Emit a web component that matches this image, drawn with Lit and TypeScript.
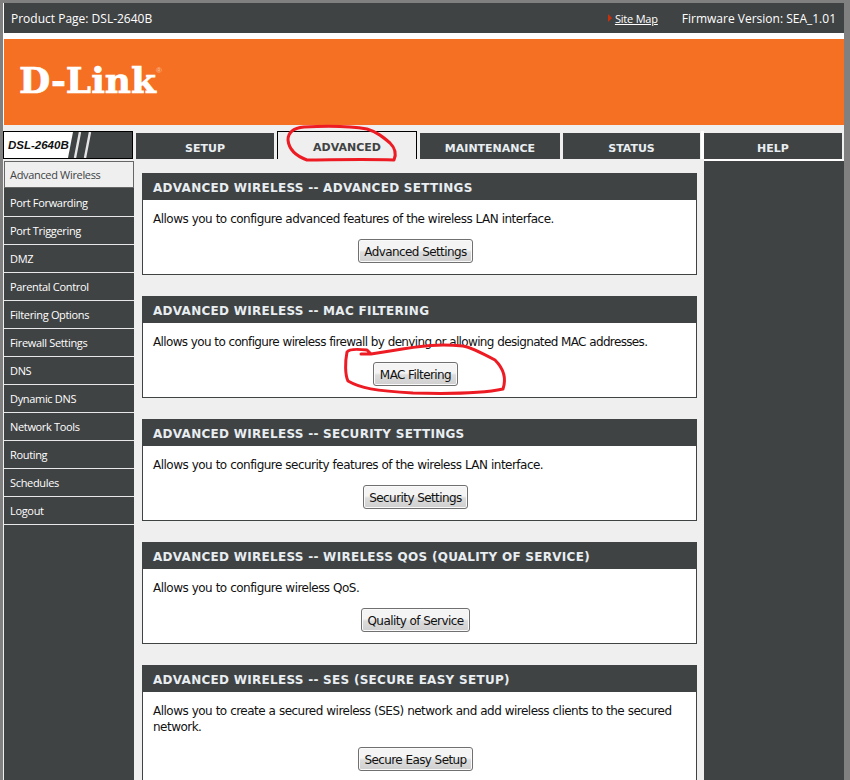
import { LitElement, html, css } from "lit";
import { customElement } from "lit/decorators.js";

const NAV = ["Advanced Wireless","Port Forwarding","Port Triggering","DMZ","Parental Control","Filtering Options","Firewall Settings","DNS","Dynamic DNS","Network Tools","Routing","Schedules","Logout"];
const TABS = ["SETUP","ADVANCED","MAINTENANCE","STATUS"];
const SECTIONS = [
  { t: "ADVANCED WIRELESS -- ADVANCED SETTINGS", d: "Allows you to configure advanced features of the wireless LAN interface.", b: "Advanced Settings", c: "" },
  { t: "ADVANCED WIRELESS -- MAC FILTERING", d: "Allows you to configure wireless firewall by denying or allowing designated MAC addresses.", b: "MAC Filtering", c: "tight" },
  { t: "ADVANCED WIRELESS -- SECURITY SETTINGS", d: "Allows you to configure security features of the wireless LAN interface.", b: "Security Settings", c: "" },
  { t: "ADVANCED WIRELESS -- WIRELESS QOS (QUALITY OF SERVICE)", d: "Allows you to configure wireless QoS.", b: "Quality of Service", c: "" },
  { t: "ADVANCED WIRELESS -- SES (SECURE EASY SETUP)", d: "Allows you to create a secured wireless (SES) network and add wireless clients to the secured network.", b: "Secure Easy Setup", c: "" },
];

@customElement("app-root")
export class AppRoot extends LitElement {
  static styles = css`
    :host { display: block; position: relative; width: 850px; height: 780px; overflow: hidden; background: #808080; font-family: "DejaVu Sans", sans-serif; font-size: 12px; color: #111; }
    .page { margin: 3px 6px 0 3px; background: #fff; padding-left: 1px; height: 777px; display: flex; flex-direction: column; overflow: hidden; }
    .top { height: 30px; flex: none; background: #404344; color: #fff; display: flex; align-items: center; padding: 0 8px 0 7px; font-family: "Open Sans", sans-serif; font-size: 12px; }
    .top .prod { flex: 1; }
    .arrow { width: 0; height: 0; border-left: 4px solid #c8300c; border-top: 4px solid transparent; border-bottom: 4px solid transparent; margin-right: 3px; }
    .site { color: #fff; text-decoration: underline; font-size: 11px; letter-spacing: -.2px; margin-right: 24px; }
    .brand { height: 86px; flex: none; margin-top: 6px; background: #f57023; display: flex; align-items: center; padding-left: 15px; }
    .logo { font-family: "DejaVu Serif", serif; font-weight: 700; font-size: 36px; color: #fff; line-height: 1; letter-spacing: 0; -webkit-text-stroke: .7px #fff; display: flex; align-items: flex-start; margin-top: -5px; }
    .logo sup { font-family: "Liberation Sans", sans-serif; font-size: 8px; color: #f9b68c; -webkit-text-stroke: 0; margin: 5px 0 0 0; line-height: 1; }
    .main { flex: 1; min-height: 0; display: grid; grid-template-columns: 131px 570px 140px; margin-left: -1px; background: #efefef; padding-top: 3px; }
    .side { display: flex; flex-direction: column; min-height: 0; }
    .model { height: 28px; width: 130px; margin-top: 3px; box-sizing: border-box; border: 1px solid #000; background: #fff; position: relative; flex: none; display: flex; align-items: center; }
    .model b { font: italic 700 11.5px "Liberation Sans", sans-serif; letter-spacing: 0; padding-left: 4px; color: #111; position: relative; white-space: nowrap; }
    .slashes { position: absolute; left: 0; top: 0; }
    .nav { margin: 2px 0 0 1px; flex: 1; background: #404344; display: flex; flex-direction: column; }
    .nav div { height: 28px; box-sizing: border-box; padding: 0 0 0 6px; border-bottom: 1px solid #e8e8e8; display: flex; align-items: center; color: #fff; font: 11px "Open Sans", sans-serif; letter-spacing: -.33px; }
    .nav div.on { background: #efefef; color: #404344; border: 1px solid #666; padding: 0 0 0 5px; height: 27px; margin-bottom: 1px; }
    .center { display: flex; flex-direction: column; min-height: 0; }
    .tabs { height: 31px; flex: none; display: grid; grid-template-columns: 138px 140px 140px 137px 1px; column-gap: 3px; padding: 5px 0 0 2px; box-sizing: border-box; }
    .tab { background: #404344; color: #e8eef2; height: 26px; font: 700 11px "DejaVu Sans", sans-serif; letter-spacing: 0; display: flex; align-items: flex-end; justify-content: center; padding-bottom: 4px; box-sizing: border-box; }
    .tab.on { background: #efefef; color: #404344; border: 1px solid #000; border-bottom: 0; margin-top: -2px; height: 28px; padding-bottom: 5px; }
    .ws { width: 3px; margin: -2px 0 0 -2px; height: 28px; background: #fff; }
    .content { padding: 14px 7px 0 8px; display: flex; flex-direction: column; gap: 21px; overflow: hidden; min-height: 0; }
    .sec { flex: none; border: 1px solid #404344; background: #fff; }
    .sec.short { height: 102px; box-sizing: border-box; }
    .sec h2 { margin: 0; height: 26px; background: #404344; color: #e8eef2; font: 700 12px "DejaVu Sans", sans-serif; letter-spacing: .28px; display: flex; align-items: center; padding: 2px 0 0 10px; white-space: nowrap; box-sizing: border-box; }
    .sec p { margin: 0; padding: 11px 10px 0; font: 12px/16px "DejaVu Sans", sans-serif; letter-spacing: -.52px; word-spacing: .2px; }
    .sec p.tight { letter-spacing: -.64px; }
    .act { display: flex; justify-content: center; padding: 12px 8px 10px 0; }
    button { height: 24px; box-sizing: border-box; border: 1px solid #707070; border-radius: 3px; background: linear-gradient(#f4f4f4 0 45%, #dcdcdc 55%, #cfcfcf); color: #111; font: 12px "DejaVu Sans", sans-serif; letter-spacing: -.58px; padding: 2px 5.5px 0; box-shadow: inset 0 0 0 1px #fafafa; }
    .help { display: flex; flex-direction: column; min-height: 0; }
    .ht { height: 26px; margin-top: 5px; width: 138px; background: #404344; color: #e8eef2; font: 700 11px "DejaVu Sans", sans-serif; display: flex; align-items: flex-end; justify-content: center; padding-bottom: 4px; box-sizing: border-box; flex: none; }
    .hb { flex: 1; background: #404344; border-top: 2px solid #fff; }
    .ink { position: absolute; inset: 0; pointer-events: none; }
  `;
  render() {
    return html`
      <div class="page">
        <div class="top">
          <span class="prod">Product Page: DSL-2640B</span>
          <span class="arrow"></span><a class="site">Site Map</a>
          <span>Firmware Version: SEA_1.01</span>
        </div>
        <div class="brand"><span class="logo">D-Link<sup>®</sup></span></div>
        <div class="main">
          <div class="side">
            <div class="model">
              <svg class="slashes" width="128" height="26" viewBox="0 0 128 26">
                <path d="M64 26 L69 0 L128 0 L128 26 Z" fill="#404344"/>
                <path d="M71 26 L76 0 M81 26 L86 0" stroke="#e4e4e4" stroke-width="2.4" fill="none"/>
              </svg>
              <b>DSL-2640B</b>
            </div>
            <div class="nav">${NAV.map((n, i) => html`<div class=${i === 0 ? "on" : ""}>${n}</div>`)}</div>
          </div>
          <div class="center">
            <div class="tabs">${TABS.map((t) => html`<div class="tab ${t === "ADVANCED" ? "on" : ""}">${t}</div>`)}<div class="ws"></div></div>
            <div class="content">
              ${SECTIONS.map((s, i) => html`<section class="sec ${i < 4 ? "short" : ""}"><h2>${s.t}</h2><p class=${s.c}>${s.d}</p><div class="act"><button>${s.b}</button></div></section>`)}
            </div>
          </div>
          <div class="help"><div class="ht">HELP</div><div class="hb"></div></div>
        </div>
      </div>
      <svg class="ink" width="850" height="780" viewBox="0 0 850 780">
        <g fill="none" stroke="#ed1c24" stroke-width="3" stroke-linecap="round" stroke-linejoin="round">
          <path d="M304 127 C294 128 288 132 288 140 C289 150 296 156 307 160 C330 160 360 159 394 160 C397 153 395 148 390 143 C383 137 377 132 367 129 C350 126 325 126 304 127"/>
          <path d="M361 354 L371 354 L367 350 C358 349 349 349 347 352 C345 362 345 375 348 381 C360 388 375 391 413 393 C450 394 480 394 503 389 C506 380 505 370 495 360 C480 352 470 347 463 346 C440 344 425 345 390 351 L371 354"/>
        </g>
      </svg>
    `;
  }
}
